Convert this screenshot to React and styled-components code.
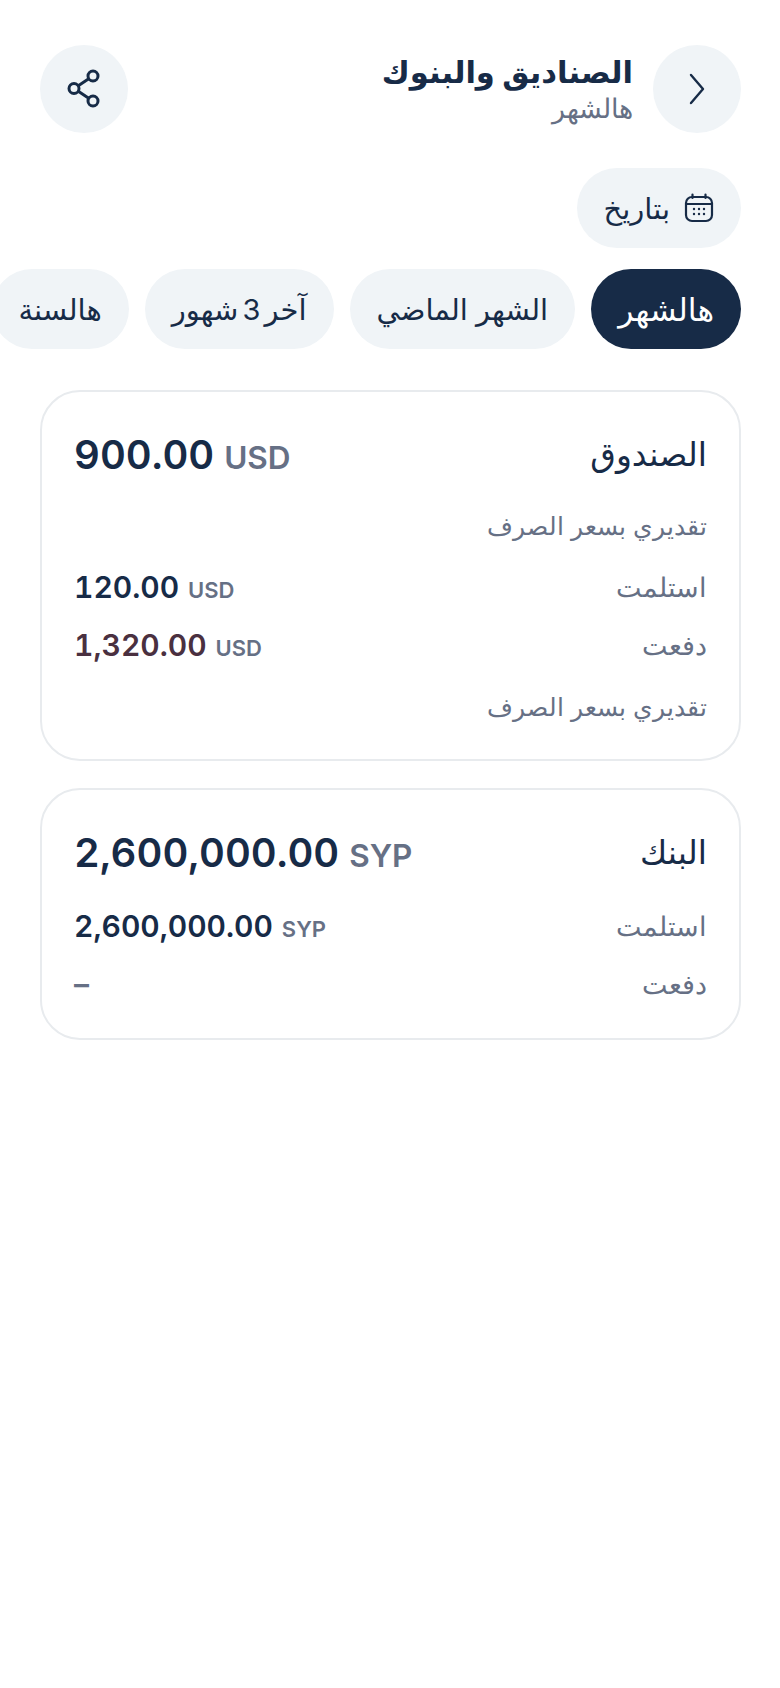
import React from 'react';
import styled, { createGlobalStyle } from 'styled-components';

const navy = '#172b47';
const gray = '#667085';
const chip = '#f0f4f7';
const line = '#e8ebee';

const GlobalStyle = createGlobalStyle`
    html, body {
        margin: 0;
        padding: 0;
        background: #fff;
    }
    body {
        font-family: Inter, "Noto Sans", "DejaVu Sans", sans-serif;
    }
`;

const Page = styled.div`
    width: 780px;
    height: 1688px;
    overflow: hidden;
    box-sizing: border-box;
    padding: 45px 0 0;
    direction: rtl;
    color: ${navy};
`;

const Header = styled.header`
    display: flex;
    align-items: center;
    padding: 0 39px 0 40px;
    gap: 20px;
`;

const RoundButton = styled.button`
    width: 88px;
    height: 88px;
    flex: none;
    border: none;
    border-radius: 50%;
    background: ${chip};
    color: ${navy};
    display: flex;
    align-items: center;
    justify-content: center;
    padding: 0;
`;

const Titles = styled.div`
    flex: 1;
    display: flex;
    flex-direction: column;
    padding-bottom: 4px;
`;

const Title = styled.h1`
    margin: 0;
    font-size: 30.6px;
    line-height: 42px;
    font-weight: 700;
`;

const Subtitle = styled.div`
    font-size: 26.5px;
    line-height: 30px;
    font-weight: 300;
    color: ${gray};
`;

const DateRow = styled.div`
    display: flex;
    padding: 35px 39px 0 0;
`;

const Pill = styled.button`
    height: 80px;
    flex: none;
    box-sizing: border-box;
    border: none;
    border-radius: 40px;
    padding: 0 27px;
    background: ${p => (p.$active ? navy : chip)};
    color: ${p => (p.$active ? '#fff' : navy)};
    font-family: inherit;
    font-size: ${p => (p.$active ? 31.5 : 29)}px;
    font-weight: ${p => (p.$active ? 500 : 400)};
    word-spacing: ${p => (p.$tight ? -4 : 0)}px;
    display: flex;
    align-items: center;
    gap: 14px;
    white-space: nowrap;
`;

const Tabs = styled.div`
    display: flex;
    gap: 16px;
    padding: 21px 39px 0 0;
    overflow: hidden;
`;

const Cards = styled.div`
    display: flex;
    flex-direction: column;
    gap: 27px;
    padding: 41px 39px 0 40px;
`;

const Card = styled.section`
    box-sizing: border-box;
    border: 2px solid ${line};
    border-radius: 40px;
    padding: 32px 32px 0;
    height: ${p => p.$height}px;
`;

const TopRow = styled.div`
    display: flex;
    align-items: center;
    justify-content: space-between;
    height: 60px;
`;

const Name = styled.div`
    font-size: 33px;
`;

const Row = styled.div`
    display: flex;
    align-items: center;
    justify-content: space-between;
    height: 58px;
    margin-top: ${p => p.$top || 0}px;
`;

const Label = styled.div`
    font-size: 26.5px;
    font-weight: 300;
    color: ${gray};
`;

const Note = styled.div`
    font-size: 25px;
    font-weight: 300;
    color: ${gray};
    margin-top: ${p => p.$top}px;
    margin-bottom: ${p => p.$bottom || 0}px;
    line-height: 36px;
`;

const Amount = styled.div`
    direction: ltr;
    display: flex;
    align-items: baseline;
    gap: ${p => (p.$big ? 10 : 9)}px;
    font-weight: 600;
    font-size: ${p => (p.$big ? 40 : 30)}px;
    font-variant-numeric: tabular-nums;
    color: ${p => p.$color || navy};
`;

const Currency = styled.span`
    color: ${gray};
    font-size: ${p => (p.$big ? 31.5 : 22)}px;
`;

const Dash = styled.span`
    color: ${gray};
`;

const Chevron = () => (
    <svg width="20" height="32" viewBox="0 0 20 32" fill="none" stroke="currentColor" strokeWidth="2.4" strokeLinecap="round" strokeLinejoin="round">
        <path d="M4 2 L16 16 L4 30" />
    </svg>
);

const ShareIcon = () => (
    <svg width="34" height="40" viewBox="0 0 34 40" fill="none" stroke="currentColor" strokeWidth="3" style={{ marginTop: -3 }}>
        <circle cx="26" cy="8" r="5" />
        <circle cx="7" cy="20.5" r="5" />
        <circle cx="26" cy="33" r="5" />
        <path d="M21.7 10.8 L11.3 17.7 M11.3 23.3 L21.7 30.2" />
    </svg>
);

const Calendar = () => (
    <svg width="30" height="30" viewBox="0 0 30 30" fill="none" stroke="currentColor" strokeWidth="2.2" strokeLinecap="round">
        <rect x="2" y="4" width="26" height="24" rx="6" />
        <path d="M2.5 11 H27.5 M8.5 1.5 V5 M21.5 1.5 V5" />
        <g fill="currentColor" stroke="none">
            {[10, 15, 20].map(x => [16, 21].map(y => <circle key={`${x}-${y}`} cx={x} cy={y} r="1.2" />))}
        </g>
    </svg>
);

const Money = ({ value, unit, big, color }) => (
    <Amount $big={big} $color={color}>
        {value}
        <Currency $big={big}>{unit}</Currency>
    </Amount>
);

export default function App() {
    return (
        <Page>
            <GlobalStyle />
            <Header>
                <RoundButton><Chevron /></RoundButton>
                <Titles>
                    <Title>الصناديق والبنوك</Title>
                    <Subtitle>هالشهر</Subtitle>
                </Titles>
                <RoundButton><ShareIcon /></RoundButton>
            </Header>

            <DateRow>
                <Pill><Calendar />بتاريخ</Pill>
            </DateRow>

            <Tabs>
                <Pill $active>هالشهر</Pill>
                <Pill>الشهر الماضي</Pill>
                <Pill $tight>آخر 3 شهور</Pill>
                <Pill>هالسنة</Pill>
            </Tabs>

            <Cards>
                <Card $height={371}>
                    <TopRow>
                        <Name>الصندوق</Name>
                        <Money big value="900.00" unit="USD" />
                    </TopRow>
                    <Note $top={24} $bottom={14}>تقديري بسعر الصرف</Note>
                    <Row>
                        <Label>استلمت</Label>
                        <Money value="120.00" unit="USD" />
                    </Row>
                    <Row>
                        <Label>دفعت</Label>
                        <Money value="1,320.00" unit="USD" color="#4a3040" />
                    </Row>
                    <Note $top={15}>تقديري بسعر الصرف</Note>
                </Card>
                <Card $height={252}>
                    <TopRow>
                        <Name>البنك</Name>
                        <Money big value="2,600,000.00" unit="SYP" />
                    </TopRow>
                    <Row $top={15}>
                        <Label>استلمت</Label>
                        <Money value="2,600,000.00" unit="SYP" />
                    </Row>
                    <Row>
                        <Label>دفعت</Label>
                        <Amount><Dash>–</Dash></Amount>
                    </Row>
                </Card>
            </Cards>
        </Page>
    );
}
